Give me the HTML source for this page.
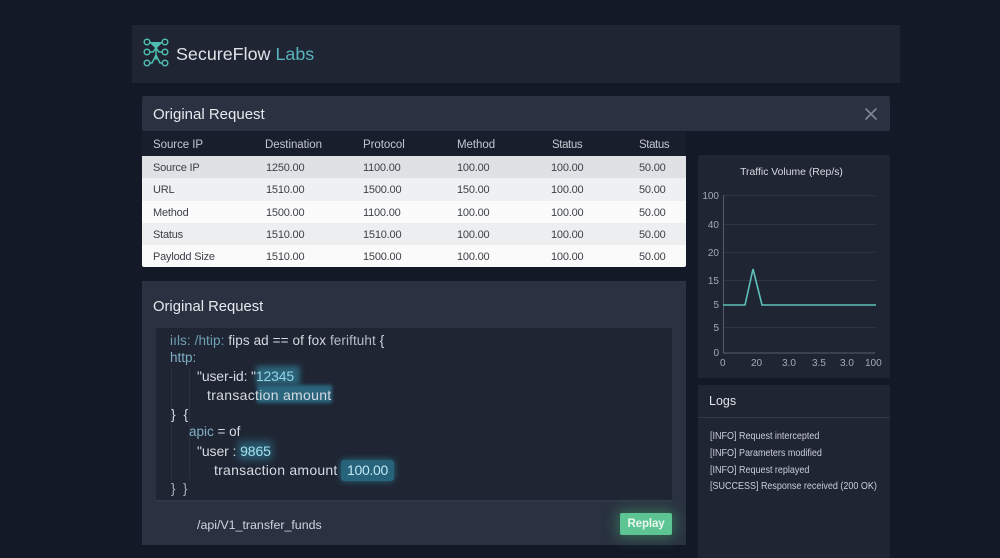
<!DOCTYPE html>
<html><head><meta charset="utf-8"><style>
html,body{margin:0;padding:0}
body{width:1000px;height:558px;overflow:hidden;position:relative;background:#131926;font-family:"Liberation Sans",sans-serif;color:#e4e7ec}
.a{position:absolute}
.t{position:absolute;white-space:nowrap;line-height:16px}
.hd{font-size:11.5px;color:#c3c8d0;top:137px;letter-spacing:-.05px}
.c{font-size:11px;color:#3c4148;letter-spacing:-.2px;margin-top:1px}
.code{font-size:14px;white-space:nowrap;position:absolute;line-height:18px;color:#d5dae0}
.lbl{position:absolute;font-size:10px;color:#a4abb5;line-height:12px;margin-top:1px}
.log{position:absolute;left:710px;font-size:10.4px;color:#c9ced6;line-height:14px;white-space:nowrap;transform:scaleX(.865);transform-origin:0 0}
</style></head><body>
<div class="a" style="left:132px;top:25px;width:768px;height:58px;background:#1f2533"></div>
<svg class="a" style="left:141px;top:36px" width="32" height="34" viewBox="0 0 32 34" fill="none" stroke="#4fbdb0" stroke-width="1.5">
<circle cx="6" cy="6" r="2.8"/><circle cx="24" cy="6" r="2.8"/><circle cx="6" cy="16" r="2.8"/><circle cx="24" cy="16" r="2.8"/><circle cx="6" cy="27" r="2.8"/><circle cx="24" cy="27" r="2.8"/>
<path d="M9 6L15 12L21 6M9 16H12L15 12L18 16H21M9 27H11L15 19L19 27H21M15 10V24"/>
<path d="M10 6H20L15 13Z" fill="#4fbdb0" stroke="none"/></svg>
<div class="t" style="left:176px;top:43px;font-size:17.9px;line-height:22px;color:#dfe3e8">SecureFlow <span style="color:#58b3bd">Labs</span></div>

<div class="a" style="left:142px;top:96px;width:748px;height:35px;background:#2a3140;border-radius:2px"></div>
<div class="t" style="left:153px;top:106px;font-size:15px;line-height:18px;color:#e6e9ed">Original Request</div>
<svg class="a" style="left:864px;top:107px" width="14" height="14" fill="none" stroke="#7f8794" stroke-width="1.6"><path d="M1.5 1.5L12.5 12.5M12.5 1.5L1.5 12.5"/></svg>

<div class="a" style="left:142px;top:132px;width:544px;height:24px;background:#181e2b"></div>
<div class="a" style="left:142px;top:156px;width:544px;height:22px;background:#dfe1e4"></div>
<div class="a" style="left:142px;top:178px;width:544px;height:23px;background:#eef0f2"></div>
<div class="a" style="left:142px;top:201px;width:544px;height:22px;background:#fbfbfb"></div>
<div class="a" style="left:142px;top:223px;width:544px;height:22px;background:#eceef0"></div>
<div class="a" style="left:142px;top:245px;width:544px;height:22px;background:#fafafa;border-radius:0 0 2px 2px"></div>

<div class="t hd" style="left:153px">Source IP</div><div class="t hd" style="left:265px">Destination</div><div class="t hd" style="left:363px">Protocol</div><div class="t hd" style="left:457px">Method</div><div class="t hd" style="left:552px;letter-spacing:-.4px">Status</div><div class="t hd" style="left:639px;letter-spacing:-.4px">Status</div>

<div class="t c" style="left:153px;top:159px">Source IP</div><div class="t c" style="left:266px;top:159px">1250.00</div><div class="t c" style="left:363px;top:159px">1100.00</div><div class="t c" style="left:457px;top:159px">100.00</div><div class="t c" style="left:551px;top:159px">100.00</div><div class="t c" style="left:639px;top:159px">50.00</div>
<div class="t c" style="left:153px;top:181px">URL</div><div class="t c" style="left:266px;top:181px">1510.00</div><div class="t c" style="left:363px;top:181px">1500.00</div><div class="t c" style="left:457px;top:181px">150.00</div><div class="t c" style="left:551px;top:181px">100.00</div><div class="t c" style="left:639px;top:181px">50.00</div>
<div class="t c" style="left:153px;top:204px">Method</div><div class="t c" style="left:266px;top:204px">1500.00</div><div class="t c" style="left:363px;top:204px">1100.00</div><div class="t c" style="left:457px;top:204px">100.00</div><div class="t c" style="left:551px;top:204px">100.00</div><div class="t c" style="left:639px;top:204px">50.00</div>
<div class="t c" style="left:153px;top:226px">Status</div><div class="t c" style="left:266px;top:226px">1510.00</div><div class="t c" style="left:363px;top:226px">1510.00</div><div class="t c" style="left:457px;top:226px">100.00</div><div class="t c" style="left:551px;top:226px">100.00</div><div class="t c" style="left:639px;top:226px">50.00</div>
<div class="t c" style="left:153px;top:248px">Paylodd Size</div><div class="t c" style="left:266px;top:248px">1510.00</div><div class="t c" style="left:363px;top:248px">1500.00</div><div class="t c" style="left:457px;top:248px">100.00</div><div class="t c" style="left:551px;top:248px">100.00</div><div class="t c" style="left:639px;top:248px">50.00</div>

<div class="a" style="left:142px;top:281px;width:544px;height:264px;background:#2a3140"></div>
<div class="t" style="left:153px;top:298px;font-size:14.8px;line-height:18px;color:#e6e9ed">Original Request</div>
<div class="a" style="left:156px;top:328px;width:516px;height:174px;background:#1f2533;border-bottom:2px solid #303747;box-sizing:border-box"></div>
<div class="a" style="left:256px;top:366px;width:44px;height:19px;background:#2d6379;filter:blur(3px)"></div>
<div class="a" style="left:257px;top:385px;width:75px;height:18px;background:#2b667e;filter:blur(1.5px)"></div>
<div class="a" style="left:238px;top:441px;width:34px;height:19px;background:#28596e;filter:blur(4px)"></div>
<div class="a" style="left:341px;top:460px;width:53px;height:21px;background:#27637b;border-radius:3px;box-shadow:0 0 7px #2b7086"></div>
<div class="a" style="left:171px;top:368px;width:1px;height:112px;background:#2a3140"></div>
<div class="a" style="left:189px;top:368px;width:1px;height:110px;background:#2a3140"></div>

<div class="code" style="left:170px;top:332px;font-size:13.5px;letter-spacing:.1px"><span style="color:#6fa0b8">iıls: /htip:</span> fips ad == of fox <span style="color:#b6bec9">feriftuht</span> {</div>
<div class="code" style="left:170px;top:349px;font-size:13.5px;color:#7fb0c4">http:</div>
<div class="code" style="left:197px;top:367px;letter-spacing:-.15px">"user-id: "<span style="color:#8fd6e8">12345</span></div>
<div class="code" style="left:207px;top:386px;letter-spacing:.3px">transaction amount</div>
<div class="code" style="left:171px;top:405px">}&nbsp; {</div>
<div class="code" style="left:189px;top:423px;font-size:13.5px"><span style="color:#7fb0c4">apic</span> = of</div>
<div class="code" style="left:197px;top:442px;letter-spacing:-.1px">"user : <span style="color:#a3e2ef">9865</span></div>
<div class="code" style="left:214px;top:461px;letter-spacing:.25px">transaction amount</div>
<div class="code" style="left:347px;top:461px;color:#bfe8f2;letter-spacing:-.3px">100.00</div>
<div class="code" style="left:171px;top:480px;font-size:13.5px;color:#aab2bd">}&nbsp; }</div>
<div class="code" style="left:197px;top:516px;font-size:12.4px;color:#d0d5dc">/api/V1_transfer_funds</div>
<div class="a" style="left:620px;top:513px;width:52px;height:22px;background:#5dc592;border-radius:2px;box-shadow:0 0 14px 3px rgba(70,190,120,.4);color:#e9f7ef;font-size:11.5px;font-weight:bold;line-height:23px;text-align:center;letter-spacing:-.1px">Replay</div>

<div class="a" style="left:698px;top:155px;width:192px;height:223px;background:#1f2533;border-radius:2px"></div>
<div class="t" style="left:698px;top:165px;width:187px;text-align:center;font-size:10.4px;color:#d6dae0">Traffic Volume (Rep/s)</div>
<svg class="a" style="left:698px;top:155px" width="192" height="223" fill="none">
<g stroke="#2e3543" stroke-width="1"><path d="M25 40.5H177M25 69.5H177M25 97.5H177M25 125.5H177M25 172.5H177"/></g>
<path d="M25.5 40V198H177" stroke="#555d6b" stroke-width="1"/>
<path d="M25 150H47L55 114L64 150H178" stroke="#5cc0b8" stroke-width="1.6"/>
</svg>
<div class="lbl" style="left:698px;top:190px;width:21px;text-align:right">100</div>
<div class="lbl" style="left:698px;top:219px;width:21px;text-align:right">40</div>
<div class="lbl" style="left:698px;top:247px;width:21px;text-align:right">20</div>
<div class="lbl" style="left:698px;top:275px;width:21px;text-align:right">15</div>
<div class="lbl" style="left:698px;top:299px;width:21px;text-align:right">5</div>
<div class="lbl" style="left:698px;top:322px;width:21px;text-align:right">5</div>
<div class="lbl" style="left:698px;top:347px;width:21px;text-align:right">0</div>
<div class="lbl" style="left:720px;top:357px">0</div>
<div class="lbl" style="left:751px;top:357px">20</div>
<div class="lbl" style="left:782px;top:357px">3.0</div>
<div class="lbl" style="left:812px;top:357px">3.5</div>
<div class="lbl" style="left:840px;top:357px">3.0</div>
<div class="lbl" style="left:865px;top:357px">100</div>

<div class="a" style="left:698px;top:385px;width:192px;height:173px;background:#1f2533;border-radius:2px"></div>
<div class="a" style="left:698px;top:417px;width:192px;height:1px;background:#303747"></div>
<div class="t" style="left:709px;top:393px;font-size:12.5px;color:#e0e4e9">Logs</div>
<div class="log" style="top:430px">[INFO] Request intercepted</div>
<div class="log" style="top:447px">[INFO] Parameters modified</div>
<div class="log" style="top:464px">[INFO] Request replayed</div>
<div class="log" style="top:480px">[SUCCESS] Response received (200 OK)</div>
</body></html>
